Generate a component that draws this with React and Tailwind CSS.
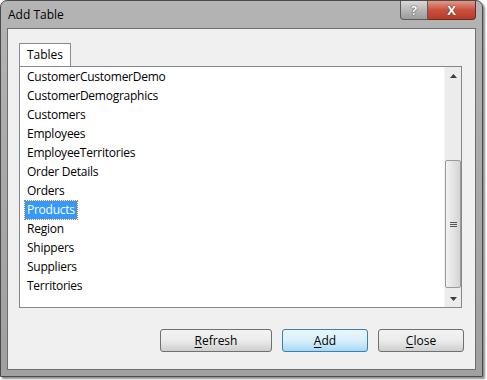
import React from 'react';

const tables = [
  'CustomerCustomerDemo',
  'CustomerDemographics',
  'Customers',
  'Employees',
  'EmployeeTerritories',
  'Order Details',
  'Orders',
  'Products',
  'Region',
  'Shippers',
  'Suppliers',
  'Territories',
];

const font = { fontFamily: '"Segoe UI", "Open Sans", "Noto Sans", sans-serif' };

const CaptionButtons = () => (
  <div className="flex self-start mr-[6px]">
    <div className="w-[28px] h-[19px] rounded-bl-[4px] border border-t-0 border-[#5a5a5a] bg-gradient-to-b from-[#d8d8d8] via-[#b8b8b8] to-[#9c9c9c] flex items-center justify-center">
      <span className="text-[13px] font-bold leading-none text-white [text-shadow:0_0_1px_#333,0_0_1px_#333]" style={font}>?</span>
    </div>
    <div className="w-[48px] h-[19px] rounded-br-[4px] border border-l-0 border-t-0 border-[#6b2a22] bg-gradient-to-b from-[#e0998b] via-[#c8503c] to-[#b63c2a] flex items-center justify-center">
      <span className="text-[13px] font-bold leading-none text-white [text-shadow:0_0_1px_#333,0_0_1px_#333]" style={font}>X</span>
    </div>
  </div>
);

const Scrollbar = () => (
  <div className="w-[17px] h-full bg-[#ececec] flex flex-col items-center border-l border-[#f4f4f4]">
    <div className="h-[17px] w-full flex items-center justify-center">
      <svg width="7" height="4" viewBox="0 0 7 4"><path d="M3.5 0 L7 4 L0 4 Z" fill="#3c3c3c" /></svg>
    </div>
    <div className="flex-1 w-full flex flex-col">
      <div className="h-[76px]" />
      <div className="h-[128px] rounded-[2px] border border-[#9a9a9a] bg-gradient-to-r from-[#f2f2f2] via-[#e4e4e4] to-[#d4d4d4] flex items-center justify-center">
        <div className="flex flex-col gap-[1px]">
          <div className="w-[7px] h-[1px] bg-[#555]" />
          <div className="w-[7px] h-[1px] bg-[#555]" />
          <div className="w-[7px] h-[1px] bg-[#555]" />
        </div>
      </div>
      <div className="flex-1" />
    </div>
    <div className="h-[17px] w-full flex items-center justify-center">
      <svg width="7" height="4" viewBox="0 0 7 4"><path d="M0 0 L7 0 L3.5 4 Z" fill="#3c3c3c" /></svg>
    </div>
  </div>
);

const Button = ({ label, hot, primary, width }) => (
  <button
    className={`h-[23px] rounded-[3px] border text-[12px] text-black flex items-center justify-center ${width} ${
      primary
        ? 'border-[#3c7fb1] bg-gradient-to-b from-[#eaf6fd] via-[#d9f0fc] to-[#a7d9f5]'
        : 'border-[#707070] bg-gradient-to-b from-[#f2f2f2] via-[#ebebeb] to-[#cfcfcf]'
    }`}
    style={font}
  >
    <span>
      <span className="underline underline-offset-2">{hot}</span>
      {label}
    </span>
  </button>
);

export default function App() {
  return (
    <div className="w-[487px] h-[380px] bg-white">
      <div className="w-[483px] h-[377px] rounded-t-[7px] border border-[#4a4a4a] bg-gradient-to-b from-[#b4b4b4] via-[#a8a8a8] to-[#a0a0a0] flex flex-col shadow-[2px_2px_2px_rgba(0,0,0,0.45)]">
        <div className="h-[27px] flex items-start justify-between">
          <div className="pl-[7px] pt-[6px] text-[12px] text-black leading-[16px]" style={font}>Add Table</div>
          <CaptionButtons />
        </div>
        <div className="mx-[6px] mb-[6px] flex-1 border border-[#6e6e6e] bg-[#f0f0f0] flex flex-col px-[11px] pt-[14px]">
          <div className="flex">
            <div className="w-[52px] h-[23px] bg-white border border-b-0 border-[#898c95] flex items-center justify-center text-[12px] text-black" style={font}>
              Tables
            </div>
          </div>
          <div className="h-[242px] w-[443px] bg-white border border-[#828790] flex">
            <div className="flex-1 pl-[5px] pt-[1px] flex flex-col">
              {tables.map((t) => (
                <div key={t} className="h-[19px] flex items-start">
                  <span
                    className={`px-[2px] h-[18px] flex items-center text-[12px] leading-none tracking-[-0.25px] ${
                      t === 'Products' ? 'bg-[#3399ff] text-white outline outline-1 outline-dotted outline-[#c08040]' : 'text-black'
                    }`}
                    style={font}
                  >
                    {t}
                  </span>
                </div>
              ))}
            </div>
            <Scrollbar />
          </div>
          <div className="flex justify-end gap-[10px] mt-[21px]">
            <Button hot="R" label="efresh" width="w-[112px]" />
            <Button hot="A" label="dd" primary width="w-[86px]" />
            <Button hot="C" label="lose" width="w-[86px]" />
          </div>
        </div>
      </div>
    </div>
  );
}
